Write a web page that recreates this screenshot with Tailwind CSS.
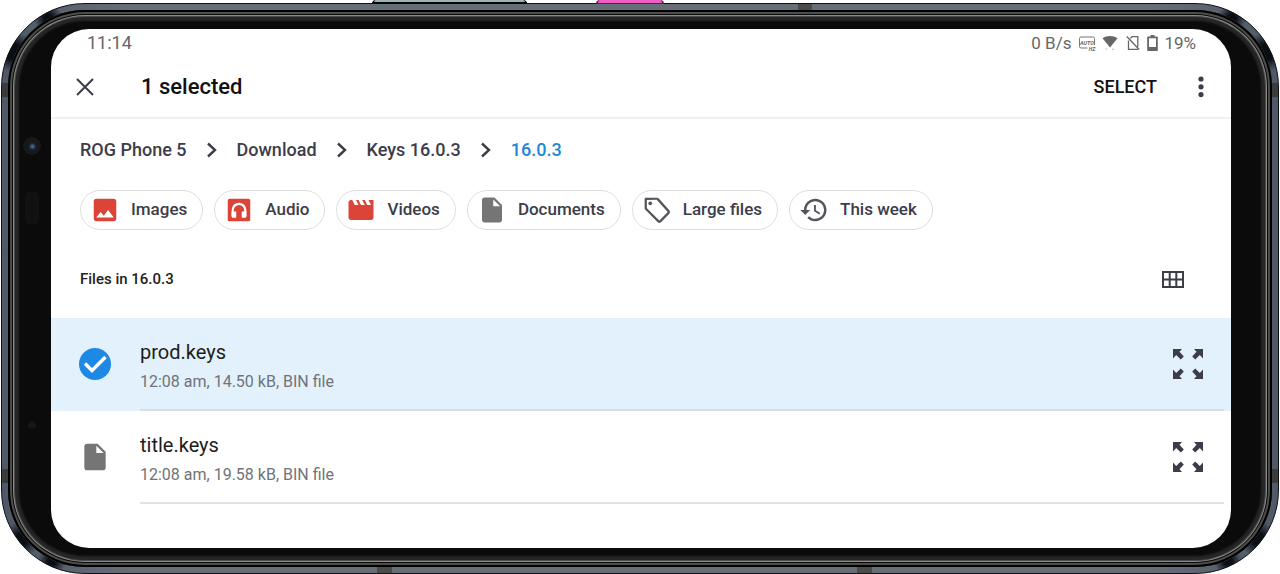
<!DOCTYPE html>
<html lang="en">
<head>
	<meta charset="UTF-8" />
	<title>Files - 16.0.3</title>
	<meta name="viewport" content="width=device-width, initial-scale=1.0">
	<script src="https://cdn.jsdelivr.net/npm/@tailwindcss/browser@4"></script>
</head>
<body class="bg-white min-h-screen flex flex-col pt-[3px] px-px font-[Roboto,'Open_Sans',sans-serif] text-[#3c3d49]">

	<!-- phone frame -->
	<div class="relative flex-1 flex flex-col rounded-[84px] border border-[#0d1116] p-[6px] bg-[radial-gradient(circle_at_12px_48px,#0b0f14_0_8px,transparent_20px),radial-gradient(circle_at_46px_14px,#0b0f14_0_4px,transparent_14px),radial-gradient(circle_at_calc(100%_-_12px)_48px,#0b0f14_0_8px,transparent_20px),radial-gradient(circle_at_calc(100%_-_46px)_14px,#0b0f14_0_4px,transparent_14px),radial-gradient(circle_at_20px_calc(100%_-_34px),#0b0f14_0_6px,transparent_18px),radial-gradient(circle_at_50px_calc(100%_-_12px),#0b0f14_0_4px,transparent_14px),radial-gradient(circle_at_calc(100%_-_20px)_calc(100%_-_34px),#0b0f14_0_6px,transparent_18px),radial-gradient(circle_at_calc(100%_-_50px)_calc(100%_-_12px),#0b0f14_0_4px,transparent_14px),linear-gradient(90deg,#4f5866,#666e78_10%,#666e78_90%,#4f5866)]">
		<!-- side keys -->
		<span class="absolute left-[370px] -top-1 w-[155px] h-1 rounded-t-sm bg-[#9fb3b3] border-b-2 border-x-2 border-[#050809]"></span>
		<span class="absolute left-[594px] -top-1 w-[68px] h-1 rounded-t-sm bg-[#ee5fc4] border-b border-x-2 border-[#7a0f48]"></span>
		<!-- antenna bands -->
		<span class="absolute left-[796px] top-0 w-[14px] h-[6px] bg-[#4a4b4a]"></span>
		<span class="absolute left-[375px] bottom-0 w-[15px] h-[6px] bg-[#4a4b4a]"></span>
		<span class="absolute left-[855px] bottom-0 w-[15px] h-[6px] bg-[#4a4b4a]"></span>
		<span class="absolute left-0 top-[79px] w-[6px] h-[14px] bg-[#3a3b3b]"></span>
		<span class="absolute right-0 top-[79px] w-[6px] h-[14px] bg-[#3a3b3b]"></span>
		<span class="absolute left-0 bottom-[90px] w-[6px] h-[14px] bg-[#3a3b3b]"></span>
		<span class="absolute right-0 bottom-[90px] w-[6px] h-[14px] bg-[#3a3b3b]"></span>

		<!-- bezel -->
		<div class="relative flex-1 flex flex-col rounded-[77px] bg-[#0b0b0b] pt-[19px] pb-[19px] pl-[43px] pr-[41px] shadow-[inset_0_0_0_2px_#000,inset_0_0_0_4px_#4c4d4d,inset_0_0_0_5px_#0a0a0a,inset_0_0_0_6px_#8a8b89,inset_0_0_0_7px_#4c4c4b,inset_0_0_2px_11px_#262626]">
			<span class="absolute left-[15px] top-[127px] size-[18px] rounded-full bg-[#17181b] grid place-items-center"><span class="size-[9px] rounded-full bg-[radial-gradient(circle,#41617f_0_1px,#1a2836_3px,#10151c_5px)]"></span></span>
			<span class="absolute left-[17px] top-[181px] w-[14px] h-[34px] rounded-full bg-[#111112]"></span>
			<span class="absolute left-[20px] bottom-[138px] size-2 rounded-full bg-[#151515]"></span>

			<!-- screen -->
			<div class="flex-1 flex flex-col bg-white rounded-[38px] overflow-hidden">
				<div class="flex items-center justify-between h-[27px] pl-9 pr-[35px] text-[#666]">
					<span class="text-[18px] leading-[26px]">11:14</span>
					<div class="flex items-center text-[17px] leading-[26px]">
						<span>0 B/s</span>
						<svg class="w-[18px] h-[16px] ml-[7px]" viewBox="0 0 18 16" fill="none">
							<path d="M9.500 13H3a1.500 1.500 0 0 1-1.500-1.500v-8A1.500 1.500 0 0 1 3 2h12a1.500 1.500 0 0 1 1.500 1.500V10" stroke="#777" />
							<text x="9" y="9.500" text-anchor="middle" font-size="5.500" font-weight="700" font-style="italic" fill="#666">AUTO</text>
							<text x="14" y="15.500" text-anchor="middle" font-size="5" font-weight="700" font-style="italic" fill="#666">HZ</text>
						</svg>
						<svg class="w-4 h-4 ml-[6px]" viewBox="0 0 16 16">
							<path d="M0.500 3.200C5 .2 11 .2 15.500 3.200L8 12.500z" fill="#666" />
							<path d="M3 13.500h3l-1.500 1.500zM9.500 15l1.500-2 1.500 2z" fill="#ccc" />
						</svg>
						<svg class="w-[14px] h-4 ml-2" viewBox="0 0 14 16" fill="none" stroke="#666" stroke-width="1.300">
							<path d="M4.500 3.500L6 1.700h5.800v10M2.500 5.500v8.800h9.300M.8 1.500l12.400 13" />
						</svg>
						<svg class="w-[11px] h-[18px] ml-[7px]" viewBox="0 0 11 18">
							<path d="M3.500 1h4v1.500H10a.8.8 0 0 1 .8.8v13a.8.8 0 0 1-.8.8H1a.8.8 0 0 1-.8-.8v-13a.8.8 0 0 1 .8-.8h2.500zM2 4.200v8.800h7V4.200z" fill="#666" fill-rule="evenodd" />
						</svg>
						<span class="ml-[6px]">19%</span>
					</div>
				</div>

				<header class="flex items-center h-[63px] pl-[25px] pr-[27px] border-b-2 border-[#f0f0f0]">
					<button aria-label="Close">
						<svg class="size-[18px]" viewBox="0 0 18 18" fill="none" stroke="#3c3d49" stroke-width="2"><path d="M1 1l16 16M17 1L1 17" /></svg>
					</button>
					<h1 class="ml-[47px] text-[22px] leading-8 font-medium text-[#111]">1 selected</h1>
					<button class="ml-auto text-[18px] leading-8 font-medium text-[#111]">SELECT</button>
					<button class="ml-[41px]" aria-label="More options">
						<svg class="w-[6px] h-6" viewBox="0 0 6 24" fill="#3c3d49"><circle cx="3" cy="4" r="2.600" /><circle cx="3" cy="11.800" r="2.600" /><circle cx="3" cy="19.600" r="2.600" /></svg>
					</button>
				</header>

				<nav class="flex items-center gap-5 h-[62px] px-[29px] text-[18px] leading-8 font-medium">
					<a href="#">ROG Phone 5</a>
					<svg class="w-[10px] h-4" viewBox="0 0 10 16" fill="none" stroke="#3c3d49" stroke-width="2.400"><path d="M1 1.500L8 8l-7 6.500" /></svg>
					<a href="#">Download</a>
					<svg class="w-[10px] h-4" viewBox="0 0 10 16" fill="none" stroke="#3c3d49" stroke-width="2.400"><path d="M1 1.500L8 8l-7 6.500" /></svg>
					<a href="#">Keys 16.0.3</a>
					<svg class="w-[10px] h-4" viewBox="0 0 10 16" fill="none" stroke="#3c3d49" stroke-width="2.400"><path d="M1 1.500L8 8l-7 6.500" /></svg>
					<a href="#" class="text-[#2287d6]">16.0.3</a>
				</nav>

				<div class="flex flex-wrap gap-[11px] pt-[9px] px-[29px] text-[17px] font-medium">
					<button class="flex items-center gap-[11px] h-10 pl-[9px] pr-[15px] rounded-full border border-[#dedede]">
						<svg class="size-[30px]" viewBox="0 0 24 24" fill="#db4437"><path d="M21 19V5c0-1.100-.9-2-2-2H5c-1.100 0-2 .9-2 2v14c0 1.100.9 2 2 2h14c1.100 0 2-.9 2-2z" /><path d="M5 18l3.500-4.500 2.500 3.010L14.500 12l4.500 6z" fill="#fff" /></svg>
						Images
					</button>
					<button class="flex items-center gap-[11px] h-10 pl-[9px] pr-[15px] rounded-full border border-[#dedede]">
						<svg class="size-[30px]" viewBox="0 0 24 24" fill="#db4437"><rect x="3" y="3" width="18" height="18" rx="1.500" /><path d="M7 17v-5a5 5 0 0 1 10 0v5" stroke="#fff" stroke-width="1.800" fill="none" /><path d="M6.100 13.200h3.700v4.900H7.100a1 1 0 0 1-1-1zM14.200 13.200h3.700v3.900a1 1 0 0 1-1 1h-2.700z" fill="#fff" /></svg>
						Audio
					</button>
					<button class="flex items-center gap-[11px] h-10 pl-[9px] pr-[15px] rounded-full border border-[#dedede]">
						<svg class="size-[30px]" viewBox="0 0 24 24" fill="#db4437"><path d="M18 4l2 4h-3l-2-4h-2l2 4h-3l-2-4H8l2 4H7L5 4H4c-1.100 0-1.990.9-1.990 2L2 18c0 1.100.9 2 2 2h16c1.100 0 2-.9 2-2V4h-4z" /></svg>
						Videos
					</button>
					<button class="flex items-center gap-[11px] h-10 pl-[9px] pr-[15px] rounded-full border border-[#dedede]">
						<svg class="size-[30px]" viewBox="0 0 24 24" fill="#757575"><path d="M6 2c-1.100 0-1.990.9-1.990 2L4 20c0 1.100.89 2 1.990 2H18c1.100 0 2-.9 2-2V8l-6-6H6zm7 7V3.500L18.500 9H13z" /></svg>
						Documents
					</button>
					<button class="flex items-center gap-[11px] h-10 pl-[9px] pr-[15px] rounded-full border border-[#dedede]">
						<svg class="size-[30px]" viewBox="0 0 24 24" fill="none" stroke="#55565c" stroke-width="1.800" stroke-linejoin="round"><path d="M3 3.300v7.200a1 1 0 0 0 .3.700l9.900 9.900a1 1 0 0 0 1.400 0l6.600-6.800a1 1 0 0 0 0-1.400L12.600 3.300a1 1 0 0 0-.7-.3H3.600a.6.6 0 0 0-.6.300z" /><circle cx="6.600" cy="6.600" r="1.500" fill="#55565c" stroke="none" /></svg>
						Large files
					</button>
					<button class="flex items-center gap-[11px] h-10 pl-[9px] pr-[15px] rounded-full border border-[#dedede]">
						<svg class="size-[30px]" viewBox="0 0 24 24" fill="#55565c"><path d="M13 3c-4.970 0-9 4.030-9 9H1l3.890 3.890.07.14L9 12H6c0-3.870 3.130-7 7-7s7 3.130 7 7-3.130 7-7 7c-1.930 0-3.680-.79-4.940-2.060l-1.420 1.420C8.270 19.990 10.510 21 13 21c4.970 0 9-4.030 9-9s-4.030-9-9-9zm-1 5v5l4.280 2.540.72-1.210-3.500-2.080V8H12z" /></svg>
						This week
					</button>
				</div>

				<div class="flex items-center justify-between h-[88px] pt-[10px] pl-[29px] pr-[47px]">
					<h2 class="text-[15px] leading-6 font-medium text-[#222]">Files in 16.0.3</h2>
					<button aria-label="Grid view">
						<svg class="w-[22px] h-[17px]" viewBox="0 0 22 17" fill="none" stroke="#3c3d49" stroke-width="2"><path d="M1 1h20v15H1zM1 8.500h20M7.700 1v15M14.300 1v15" /></svg>
					</button>
				</div>

				<ul>
					<li class="flex h-[93px] pl-7 pr-[7px] bg-[#e3f1fd]">
						<label class="grid place-items-center w-8 mr-[29px] pb-0.5">
							<input type="checkbox" checked aria-label="prod.keys" class="appearance-none col-start-1 row-start-1 size-8 rounded-full bg-[#1e88e5]">
							<svg class="col-start-1 row-start-1 size-8 pointer-events-none" viewBox="0 0 32 32" fill="none" stroke="#fff" stroke-width="3.400"><path d="M6 15.500l7 7L26.500 9" /></svg>
						</label>
						<div class="flex-1 flex items-center justify-between pr-[21px] border-b-2 border-[#dadde2]">
							<div class="pt-1">
								<p class="text-[20px] leading-8 text-[#1d1d20]">prod.keys</p>
								<p class="text-[16px] leading-7 text-[#707378]">12:08 am, 14.50 kB, BIN file</p>
							</div>
							<button aria-label="Open prod.keys">
								<svg class="size-[30px]" viewBox="0 0 30 30" fill="#3c3d49"><path id="arrow" d="M0 0h9L6.500 2.800l4.300 4.600-3 3-4.600-4.500L0 9.500z" /><use href="#arrow" transform="matrix(-1 0 0 1 30 0)" /><use href="#arrow" transform="matrix(1 0 0 -1 0 30)" /><use href="#arrow" transform="matrix(-1 0 0 -1 30 30)" /></svg>
							</button>
						</div>
					</li>
					<li class="flex h-[93px] pl-7 pr-[7px]">
						<div class="grid place-items-center w-8 mr-[29px] pb-0.5">
							<svg class="size-8" viewBox="0 0 24 24" fill="#757575"><path d="M6 2c-1.100 0-1.990.9-1.990 2L4 20c0 1.100.89 2 1.990 2H18c1.100 0 2-.9 2-2V8l-6-6H6zm7 7V3.500L18.500 9H13z" /></svg>
						</div>
						<div class="flex-1 flex items-center justify-between pr-[21px] border-b-2 border-[#e2e2e2]">
							<div class="pt-1">
								<p class="text-[20px] leading-8 text-[#1d1d20]">title.keys</p>
								<p class="text-[16px] leading-7 text-[#707378]">12:08 am, 19.58 kB, BIN file</p>
							</div>
							<button aria-label="Open title.keys">
								<svg class="size-[30px]" viewBox="0 0 30 30" fill="#3c3d49"><use href="#arrow" /><use href="#arrow" transform="matrix(-1 0 0 1 30 0)" /><use href="#arrow" transform="matrix(1 0 0 -1 0 30)" /><use href="#arrow" transform="matrix(-1 0 0 -1 30 30)" /></svg>
							</button>
						</div>
					</li>
				</ul>
			</div>
		</div>
	</div>

</body>
</html>
